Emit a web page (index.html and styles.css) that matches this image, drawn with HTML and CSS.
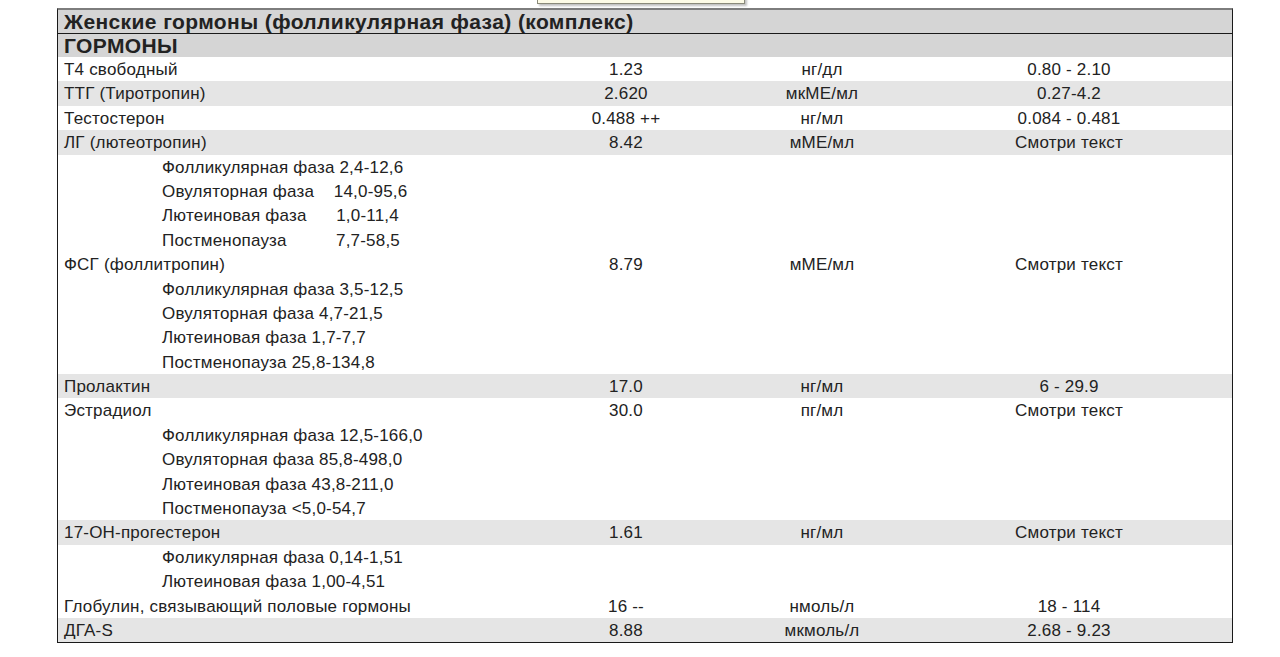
FILE: index.html
```html
<!DOCTYPE html>
<html lang="ru">
<head>
<meta charset="utf-8">
<link rel="stylesheet" href="styles.css">
</head>
<body>
<div class="page">
  <div class="tip"></div>
  <div class="report">
    <div class="title">Женские гормоны (фолликулярная фаза) (комплекс)</div>
    <div class="section">ГОРМОНЫ</div>
    <div class="row"><span class="name">Т4 свободный</span><span class="val">1.23</span><span class="unit">нг/дл</span><span class="ref">0.80 - 2.10</span></div>
    <div class="row alt"><span class="name">ТТГ (Тиротропин)</span><span class="val">2.620</span><span class="unit">мкМЕ/мл</span><span class="ref">0.27-4.2</span></div>
    <div class="row"><span class="name">Тестостерон</span><span class="val">0.488 ++</span><span class="unit">нг/мл</span><span class="ref">0.084 - 0.481</span></div>
    <div class="row alt"><span class="name">ЛГ (лютеотропин)</span><span class="val">8.42</span><span class="unit">мМЕ/мл</span><span class="ref">Смотри текст</span></div>
    <div class="sub">Фолликулярная фаза 2,4-12,6</div>
    <div class="sub">Овуляторная фаза    14,0-95,6</div>
    <div class="sub">Лютеиновая фаза      1,0-11,4</div>
    <div class="sub">Постменопауза          7,7-58,5</div>
    <div class="row"><span class="name">ФСГ (фоллитропин)</span><span class="val">8.79</span><span class="unit">мМЕ/мл</span><span class="ref">Смотри текст</span></div>
    <div class="sub">Фолликулярная фаза 3,5-12,5</div>
    <div class="sub">Овуляторная фаза 4,7-21,5</div>
    <div class="sub">Лютеиновая фаза 1,7-7,7</div>
    <div class="sub">Постменопауза 25,8-134,8</div>
    <div class="row alt"><span class="name">Пролактин</span><span class="val">17.0</span><span class="unit">нг/мл</span><span class="ref">6 - 29.9</span></div>
    <div class="row"><span class="name">Эстрадиол</span><span class="val">30.0</span><span class="unit">пг/мл</span><span class="ref">Смотри текст</span></div>
    <div class="sub">Фолликулярная фаза 12,5-166,0</div>
    <div class="sub">Овуляторная фаза 85,8-498,0</div>
    <div class="sub">Лютеиновая фаза 43,8-211,0</div>
    <div class="sub">Постменопауза &lt;5,0-54,7</div>
    <div class="row alt"><span class="name">17-ОН-прогестерон</span><span class="val">1.61</span><span class="unit">нг/мл</span><span class="ref">Смотри текст</span></div>
    <div class="sub">Фоликулярная фаза 0,14-1,51</div>
    <div class="sub">Лютеиновая фаза 1,00-4,51</div>
    <div class="row"><span class="name">Глобулин, связывающий половые гормоны</span><span class="val">16 --</span><span class="unit">нмоль/л</span><span class="ref">18 - 114</span></div>
    <div class="row alt last"><span class="name">ДГА-S</span><span class="val">8.88</span><span class="unit">мкмоль/л</span><span class="ref">2.68 - 9.23</span></div>
  </div>
</div>
</body>
</html>
```
FILE: styles.css
```css
html, body {
  margin: 0;
  padding: 0;
  background: #fff;
}
body {
  font-family: "Liberation Sans", Arial, sans-serif;
  color: #222;
}
.page {
  position: relative;
  padding: 8px 0 0 57px;
}
.tip {
  position: absolute;
  left: 537px;
  top: -14px;
  width: 208px;
  height: 18px;
  background: #fdfbe6;
  border: 1px solid #8a8a7a;
  box-shadow: 2px 2px 2px rgba(0,0,0,0.25);
  box-sizing: border-box;
}
.report {
  width: 1176px;
  box-sizing: border-box;
  border: 1px solid #1a1a1a;
  border-top: 2px solid #7d7d7d;
}
.title {
  background: #d5d5d5;
  font-weight: bold;
  font-size: 21px;
  letter-spacing: 0.4px;
  height: 23px;
  line-height: 23px;
  padding-left: 6px;
  border-bottom: 1px solid #1a1a1a;
}
.section {
  background: #d5d5d5;
  font-weight: bold;
  font-size: 21px;
  letter-spacing: 0.4px;
  height: 23px;
  line-height: 24px;
  padding-left: 6px;
}
.row {
  display: grid;
  grid-template-columns: 472px 192px 200px 294px 1fr;
  box-sizing: border-box;
  height: 24.4px;
  padding-top: 1px;
  line-height: 23.4px;
  font-size: 17px;
  letter-spacing: 0.2px;
}
.row.alt {
  background: #e5e5e5;
}
.name {
  padding-left: 6px;
  white-space: nowrap;
}
.val, .unit, .ref {
  text-align: center;
  white-space: nowrap;
}
.sub {
  box-sizing: border-box;
  height: 24.4px;
  padding-top: 1px;
  line-height: 23.4px;
  font-size: 17px;
  letter-spacing: 0.2px;
  padding-left: 104px;
  white-space: pre;
}
.row.last {
  height: 24px;
  line-height: 23px;
}
```
